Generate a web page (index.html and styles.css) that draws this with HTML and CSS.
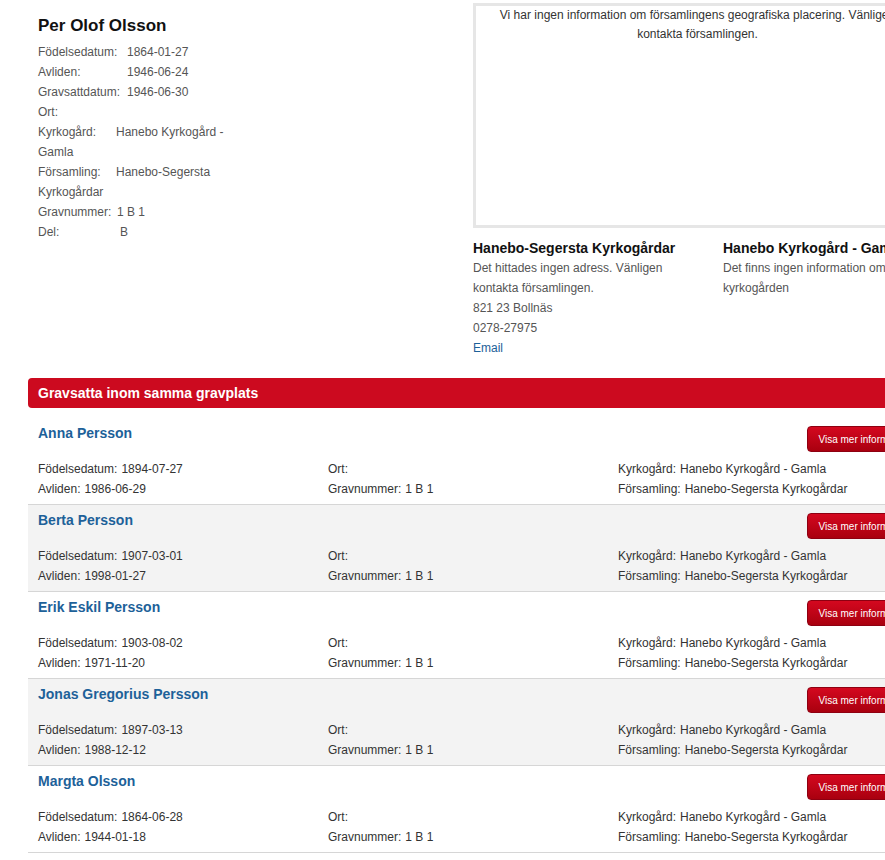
FILE: index.html
```html
<!DOCTYPE html>
<html lang="sv">
  <head>
    <meta charset="UTF-8" />
    <title>Per Olof Olsson</title>
    <link rel="stylesheet" href="styles.css">
  </head>
  <body>
    <div class="page">
      <div class="top">
        <div class="person">
          <h1 class="person__name">Per Olof Olsson</h1>
          <div class="facts">
            <div><span class="fact__label fact__label--wide">Födelsedatum:</span>1864-01-27</div>
            <div><span class="fact__label fact__label--wide">Avliden:</span>1946-06-24</div>
            <div><span class="fact__label fact__label--wide">Gravsattdatum:</span>1946-06-30</div>
            <div>Ort:</div>
            <div><span class="fact__label">Kyrkogård:</span>Hanebo Kyrkogård - Gamla</div>
            <div><span class="fact__label">Församling:</span>Hanebo-Segersta Kyrkogårdar</div>
            <div><span class="fact__label fact__label--auto">Gravnummer:</span>1 B 1</div>
            <div><span class="fact__label fact__label--del">Del:</span>B</div>
          </div>
        </div>

        <div class="church">
          <div class="map">
            Vi har ingen information om församlingens geografiska placering. Vänligen kontakta församlingen.
          </div>
          <div class="contacts">
            <div class="contact">
              <h3 class="contact__title">Hanebo-Segersta Kyrkogårdar</h3>
              <div>Det hittades ingen adress. Vänligen kontakta församlingen.</div>
              <div>821 23 Bollnäs</div>
              <div>0278-27975</div>
              <div><a class="contact__link" href="#">Email</a></div>
            </div>
            <div class="contact">
              <h3 class="contact__title">Hanebo Kyrkogård - Gamla</h3>
              <div>Det finns ingen information om kyrkogården</div>
            </div>
          </div>
        </div>
      </div>

      <div class="buried">
        <h2 class="buried__header">Gravsatta inom samma gravplats</h2>

        <div class="grave">
          <div class="grave__head">
            <a class="grave__name" href="#">Anna Persson</a>
            <button class="grave__more">Visa mer information</button>
          </div>
          <div class="grave__facts">
            <div>
              <div><span class="grave__label">Födelsedatum:</span>1894-07-27</div>
              <div><span class="grave__label">Avliden:</span>1986-06-29</div>
            </div>
            <div>
              <div><span class="grave__label">Ort:</span></div>
              <div><span class="grave__label">Gravnummer:</span>1 B 1</div>
            </div>
            <div>
              <div><span class="grave__label">Kyrkogård:</span>Hanebo Kyrkogård - Gamla</div>
              <div><span class="grave__label">Församling:</span>Hanebo-Segersta Kyrkogårdar</div>
            </div>
          </div>
        </div>

        <div class="grave grave--alt">
          <div class="grave__head">
            <a class="grave__name" href="#">Berta Persson</a>
            <button class="grave__more">Visa mer information</button>
          </div>
          <div class="grave__facts">
            <div>
              <div><span class="grave__label">Födelsedatum:</span>1907-03-01</div>
              <div><span class="grave__label">Avliden:</span>1998-01-27</div>
            </div>
            <div>
              <div><span class="grave__label">Ort:</span></div>
              <div><span class="grave__label">Gravnummer:</span>1 B 1</div>
            </div>
            <div>
              <div><span class="grave__label">Kyrkogård:</span>Hanebo Kyrkogård - Gamla</div>
              <div><span class="grave__label">Församling:</span>Hanebo-Segersta Kyrkogårdar</div>
            </div>
          </div>
        </div>

        <div class="grave">
          <div class="grave__head">
            <a class="grave__name" href="#">Erik Eskil Persson</a>
            <button class="grave__more">Visa mer information</button>
          </div>
          <div class="grave__facts">
            <div>
              <div><span class="grave__label">Födelsedatum:</span>1903-08-02</div>
              <div><span class="grave__label">Avliden:</span>1971-11-20</div>
            </div>
            <div>
              <div><span class="grave__label">Ort:</span></div>
              <div><span class="grave__label">Gravnummer:</span>1 B 1</div>
            </div>
            <div>
              <div><span class="grave__label">Kyrkogård:</span>Hanebo Kyrkogård - Gamla</div>
              <div><span class="grave__label">Församling:</span>Hanebo-Segersta Kyrkogårdar</div>
            </div>
          </div>
        </div>

        <div class="grave grave--alt">
          <div class="grave__head">
            <a class="grave__name" href="#">Jonas Gregorius Persson</a>
            <button class="grave__more">Visa mer information</button>
          </div>
          <div class="grave__facts">
            <div>
              <div><span class="grave__label">Födelsedatum:</span>1897-03-13</div>
              <div><span class="grave__label">Avliden:</span>1988-12-12</div>
            </div>
            <div>
              <div><span class="grave__label">Ort:</span></div>
              <div><span class="grave__label">Gravnummer:</span>1 B 1</div>
            </div>
            <div>
              <div><span class="grave__label">Kyrkogård:</span>Hanebo Kyrkogård - Gamla</div>
              <div><span class="grave__label">Församling:</span>Hanebo-Segersta Kyrkogårdar</div>
            </div>
          </div>
        </div>

        <div class="grave">
          <div class="grave__head">
            <a class="grave__name" href="#">Margta Olsson</a>
            <button class="grave__more">Visa mer information</button>
          </div>
          <div class="grave__facts">
            <div>
              <div><span class="grave__label">Födelsedatum:</span>1864-06-28</div>
              <div><span class="grave__label">Avliden:</span>1944-01-18</div>
            </div>
            <div>
              <div><span class="grave__label">Ort:</span></div>
              <div><span class="grave__label">Gravnummer:</span>1 B 1</div>
            </div>
            <div>
              <div><span class="grave__label">Kyrkogård:</span>Hanebo Kyrkogård - Gamla</div>
              <div><span class="grave__label">Församling:</span>Hanebo-Segersta Kyrkogårdar</div>
            </div>
          </div>
        </div>
      </div>
    </div>
  </body>
</html>
```

FILE: styles.css
```css
html,
body {
  overflow-x: hidden;
}

body {
  margin: 0;
  background-color: white;
  font-family: "Liberation Sans", Arial, sans-serif;
  font-size: 12px;
  line-height: 20px;
  color: #333;
}

.page {
  width: 903px;
  margin-left: 28px;
  padding-top: 3px;
}

.top {
  display: flex;
}

.person {
  width: 445px;
  flex-shrink: 0;
  padding: 0 10px;
  box-sizing: border-box;
}

.person__name {
  margin: 11px 0 4px;
  font-size: 17px;
  line-height: 24px;
  color: #111;
}

.facts {
  width: 200px;
  color: #555;
}

.fact__label {
  display: inline-block;
  width: 78px;
}

.fact__label--wide {
  width: 89px;
}

.fact__label--auto {
  width: 79px;
}

.fact__label--del {
  width: 82px;
}

.church {
  width: 449px;
  flex-shrink: 0;
}

.map {
  height: 219px;
  border: solid 3px #e6e6e6;
  padding: 0 10px;
  text-align: center;
  line-height: 19px;
  color: #333;
}

.contacts {
  display: flex;
  margin-top: 11px;
}

.contact {
  width: 250px;
  flex-shrink: 0;
  padding-right: 25px;
  box-sizing: border-box;
  color: #555;
}

.contact__title {
  margin: 0;
  font-size: 14px;
  line-height: 19px;
  color: #111;
  white-space: nowrap;
}

.contact__link {
  color: #1d6199;
  text-decoration: none;
}

.buried {
  margin-top: 20px;
}

.buried__header {
  margin: 0 0 10px;
  padding: 0 10px;
  height: 30px;
  line-height: 30px;
  font-size: 14px;
  color: white;
  background-color: #cc0a1f;
  border-radius: 4px 4px 0 4px;
}

.grave {
  padding: 5px 10px 5px;
  border-bottom: solid 1px #d6d6d6;
}

.grave--alt {
  background-color: #f3f3f3;
}

.grave__head {
  display: flex;
  justify-content: space-between;
  align-items: flex-start;
}

.grave__name {
  font-size: 14px;
  font-weight: bold;
  line-height: 20px;
  color: #1d6199;
  text-decoration: none;
}

.grave__more {
  margin-top: 3px;
  height: 26px;
  padding: 0 10px;
  font-family: inherit;
  font-size: 10px;
  color: white;
  background: linear-gradient(#d4081f, #a9000f);
  border: solid 1px #8e0011;
  border-radius: 4px;
}

.grave__facts {
  display: flex;
  margin-top: 7px;
}

.grave__facts > div {
  width: 290px;
}

.grave__label {
  margin-right: 4px;
}
```
